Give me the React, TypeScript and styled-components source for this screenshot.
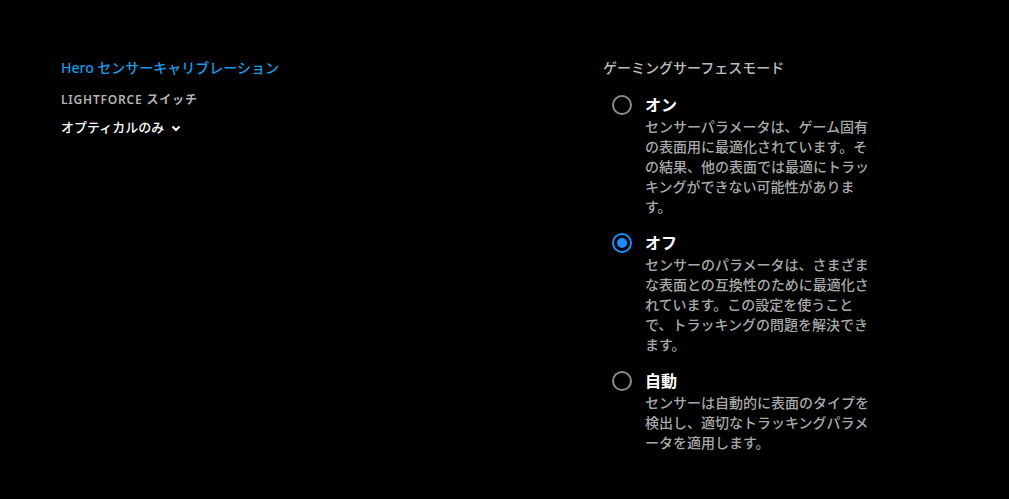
import React, { useState } from "react";
import styled, { createGlobalStyle } from "styled-components";

const GlobalStyle = createGlobalStyle`
  html, body {
    margin: 0;
    padding: 0;
    background: #000;
  }
  body {
    font-family: "Noto Sans", "Noto Sans CJK JP", sans-serif;
    -webkit-font-smoothing: antialiased;
  }
`;

type Mode = "on" | "off" | "auto";

const options: { id: Mode; label: string; text: string }[] = [
  {
    id: "on",
    label: "オン",
    text: "センサーパラメータは、ゲーム固有の表面用に最適化されています。その結果、他の表面では最適にトラッキングができない可能性があります。",
  },
  {
    id: "off",
    label: "オフ",
    text: "センサーのパラメータは、さまざまな表面との互換性のために最適化されています。この設定を使うことで、トラッキングの問題を解決できます。",
  },
  {
    id: "auto",
    label: "自動",
    text: "センサーは自動的に表面のタイプを検出し、適切なトラッキングパラメータを適用します。",
  },
];

const App: React.FC = () => {
  const [mode, setMode] = useState<Mode>("off");

  return (
    <>
      <GlobalStyle />
      <Page>
        <LeftColumn>
          <SectionTitle>Hero センサーキャリブレーション</SectionTitle>
          <SubLabel>LIGHTFORCE スイッチ</SubLabel>
          <Dropdown>
            オプティカルのみ
            <svg width="10" height="7" viewBox="0 0 10 7">
              <path d="M1.5 1.5 L5 5 L8.5 1.5" fill="none" stroke="#fff" strokeWidth="2" />
            </svg>
          </Dropdown>
        </LeftColumn>
        <RightColumn>
          <GroupTitle>ゲーミングサーフェスモード</GroupTitle>
          <OptionList>
            {options.map((o) => (
              <Option key={o.id} onClick={() => setMode(o.id)}>
                <Radio $checked={mode === o.id} />
                <OptionBody>
                  <OptionLabel>{o.label}</OptionLabel>
                  <OptionText>{o.text}</OptionText>
                </OptionBody>
              </Option>
            ))}
          </OptionList>
        </RightColumn>
      </Page>
    </>
  );
};

export default App;

const Page = styled.div`
  display: grid;
  grid-template-columns: 542px 1fr;
  padding: 58px 0 0 61px;
  min-height: 499px;
  box-sizing: border-box;
  background: #000;
`;

const LeftColumn = styled.div`
  display: flex;
  flex-direction: column;
`;

const SectionTitle = styled.div`
  font-size: 14px;
  line-height: 20px;
  font-weight: 500;
  color: #1a9ce6;
`;

const SubLabel = styled.div`
  margin-top: 13px;
  font-size: 12px;
  line-height: 18px;
  font-weight: 600;
  letter-spacing: 0.8px;
  color: #b4b4b4;
`;

const Dropdown = styled.div`
  margin-top: 8px;
  display: flex;
  align-items: center;
  gap: 7px;
  font-size: 13px;
  line-height: 20px;
  font-weight: 500;
  color: #fff;
  cursor: pointer;
  svg {
    margin-top: 2px;
  }
`;

const RightColumn = styled.div`
  display: flex;
  flex-direction: column;
`;

const GroupTitle = styled.div`
  font-size: 14px;
  line-height: 20px;
  font-weight: 500;
  color: #bdbdbd;
`;

const OptionList = styled.div`
  margin-top: 15px;
  padding-left: 9px;
  display: flex;
  flex-direction: column;
  gap: 14px;
`;

const Option = styled.div`
  display: flex;
  gap: 13px;
  cursor: pointer;
`;

const Radio = styled.span<{ $checked: boolean }>`
  flex: none;
  width: 20px;
  height: 20px;
  margin-top: 2px;
  box-sizing: border-box;
  border-radius: 50%;
  border: 2px solid ${(p) => (p.$checked ? "#1a8fff" : "#8c8c8c")};
  display: flex;
  align-items: center;
  justify-content: center;
  &::after {
    content: "";
    width: 10px;
    height: 10px;
    border-radius: 50%;
    background: #1a8fff;
    display: ${(p) => (p.$checked ? "block" : "none")};
  }
`;

const OptionBody = styled.div`
  display: flex;
  flex-direction: column;
  width: 225px;
`;

const OptionLabel = styled.div`
  font-size: 16px;
  line-height: 24px;
  font-weight: 700;
  color: #fff;
`;

const OptionText = styled.div`
  font-size: 14px;
  line-height: 20px;
  font-weight: 500;
  color: #a8a8a8;
`;
